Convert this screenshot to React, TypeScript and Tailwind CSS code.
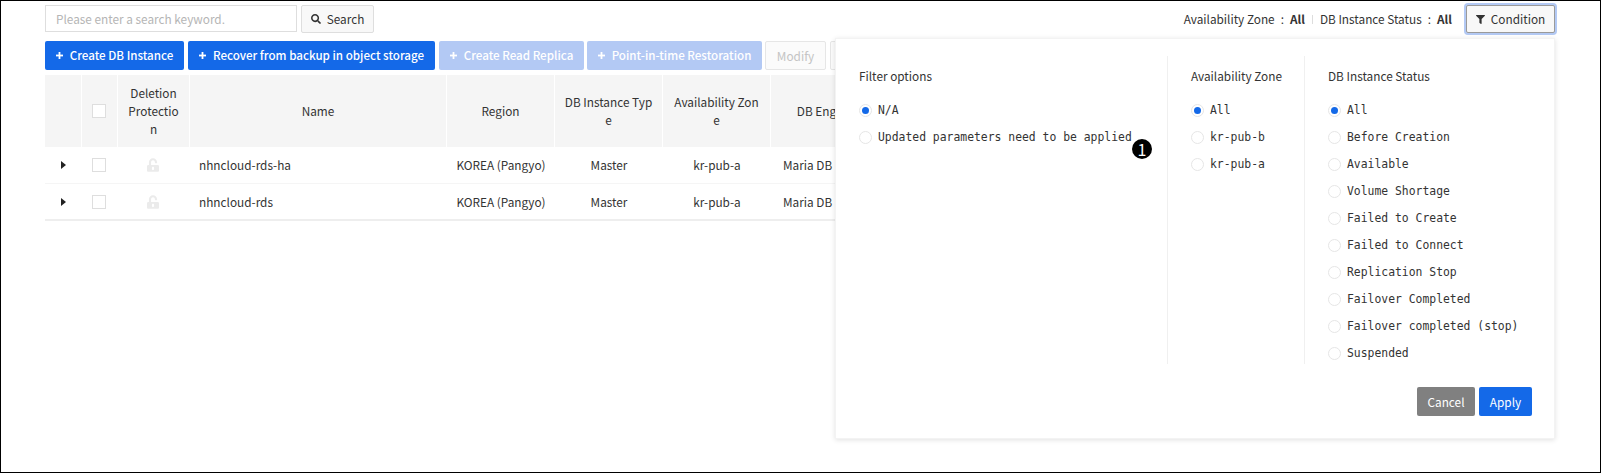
import { FaFilter, FaSearch, FaUnlockAlt } from 'react-icons/fa';

const sans = "font-['Noto_Sans_CJK_KR','Noto_Sans',sans-serif]";

const zones = ['All', 'kr-pub-b', 'kr-pub-a'];
const statuses = [
    'All',
    'Before Creation',
    'Available',
    'Volume Shortage',
    'Failed to Create',
    'Failed to Connect',
    'Replication Stop',
    'Failover Completed',
    'Failover completed (stop)',
    'Suspended',
];
const rows = ['nhncloud-rds-ha', 'nhncloud-rds'];

function Plus() {
    return (
        <svg width="7" height="7" viewBox="0 0 7 7" className="shrink-0" fill="currentColor">
            <rect x="2.6" y="0" width="1.8" height="7" />
            <rect x="0" y="2.6" width="7" height="1.8" />
        </svg>
    );
}

function ActionButton({ label, width, disabled }: { label: string; width: string; disabled?: boolean }) {
    return (
        <button
            className={`${width} h-[29px] flex items-center justify-center gap-[7px] rounded-[2px] text-white text-[11.6px] font-medium ${
                disabled ? 'bg-[#b3c9f4]' : 'bg-[#1469e8]'
            }`}
        >
            <Plus />
            {label}
        </button>
    );
}

function Radio({ label, checked }: { label: string; checked?: boolean }) {
    return (
        <label className="flex items-center h-[27px] gap-[6px]">
            <span className="w-[13px] h-[13px] rounded-full border border-[#e6e6e6] bg-white flex items-center justify-center shrink-0">
                {checked && <span className="w-[7px] h-[7px] rounded-full bg-[#1469e8]" />}
            </span>
            <span className="font-['DejaVu_Sans_Mono',monospace] text-[11.4px] text-[#333] whitespace-nowrap">{label}</span>
        </label>
    );
}

function Checkbox() {
    return <span className="block mx-auto w-[14px] h-[14px] border border-[#dedede] bg-white" />;
}

function Heading({ children }: { children: string }) {
    return <div className="h-[19px] flex items-center leading-none mt-[10px] mb-[12px]">{children}</div>;
}

export default function App() {
    return (
        <div className={`${sans} relative w-[1601px] h-[473px] border border-black bg-white text-[#333] text-[11.8px] overflow-hidden`}>
            <div className="w-[1510px] ml-[44px] pt-[4px]">
                {/* search bar */}
                <div className="flex items-start justify-between h-[28px]">
                    <div className="flex items-start gap-[4px]">
                        <input
                            placeholder="Please enter a search keyword."
                            className="w-[252px] h-[27px] border border-[#dedede] px-[10px] text-[11.8px] placeholder:text-[#b5b5b5] outline-none"
                        />
                        <button className="w-[73px] h-[28px] flex items-center justify-center gap-[6px] border border-[#dedede] bg-[#f8f8f8] rounded-[2px]">
                            <FaSearch className="w-[10px] h-[10px] text-[#333]" />
                            Search
                        </button>
                    </div>
                    <div className="flex items-center h-[28px]">
                        <span>Availability Zone</span>
                        <span className="mx-[6px]">:</span>
                        <b className="font-bold">All</b>
                        <span className="w-px h-[9px] bg-[#ddd] mx-[7px]" />
                        <span>DB Instance Status</span>
                        <span className="mx-[6px]">:</span>
                        <b className="font-bold">All</b>
                        <button className="ml-[14px] w-[89px] h-[28px] flex items-center justify-center gap-[6px] border border-[#9a9a9a] bg-[#f8f8f8] rounded-[2px] ring-2 ring-[#b3c9f4]">
                            <FaFilter className="w-[9px] h-[9px] text-[#333]" />
                            Condition
                        </button>
                    </div>
                </div>

                {/* actions */}
                <div className="flex gap-[4px] mt-[8px] h-[29px]">
                    <ActionButton label="Create DB Instance" width="w-[139px]" />
                    <ActionButton label="Recover from backup in object storage" width="w-[247px]" />
                    <ActionButton label="Create Read Replica" width="w-[145px]" disabled />
                    <ActionButton label="Point-in-time Restoration" width="w-[175px] -ml-px" disabled />
                    <button className="w-[61px] -ml-px border border-[#e6e6e6] bg-[#fbfbfb] rounded-[2px] text-[#c4c4c4]">Modify</button>
                    <button className="w-[61px] border border-[#e6e6e6] bg-[#fbfbfb] rounded-[2px]" />
                </div>

                {/* instances */}
                <table className="mt-[5px] table-fixed border-separate border-spacing-0 w-[834px] text-center">
                    <colgroup>
                        <col className="w-[37px]" />
                        <col className="w-[36px]" />
                        <col className="w-[72px]" />
                        <col className="w-[257px]" />
                        <col className="w-[108px]" />
                        <col className="w-[108px]" />
                        <col className="w-[108px]" />
                        <col className="w-[108px]" />
                    </colgroup>
                    <thead>
                        <tr className="h-[72px] bg-[#f5f5f5] leading-[18px]">
                            <th className="font-normal border-r border-white" />
                            <th className="font-normal border-r border-white pr-[2px]">
                                <Checkbox />
                            </th>
                            <th className="font-normal border-r border-white break-words px-[9px]">Deletion Protection</th>
                            <th className="font-normal border-r border-white">Name</th>
                            <th className="font-normal border-r border-white">Region</th>
                            <th className="font-normal border-r border-white break-all px-[8px]">DB Instance Type</th>
                            <th className="font-normal border-r border-white break-all px-[10px]">Availability Zone</th>
                            <th className="font-normal whitespace-nowrap">DB Engine</th>
                        </tr>
                    </thead>
                    <tbody>
                        {rows.map((name, i) => {
                            const cell = `h-[37px] ${i === rows.length - 1 ? 'border-b-2 border-[#eee]' : 'border-b border-[#f5f5f5]'}`;
                            return (
                                <tr key={name}>
                                    <td className={cell}>
                                        <span className="block mx-auto w-0 border-y-[4px] border-l-[5px] border-y-transparent border-l-[#222]" />
                                    </td>
                                    <td className={`${cell} pr-[2px]`}>
                                        <Checkbox />
                                    </td>
                                    <td className={`${cell} pr-[2px]`}>
                                        <FaUnlockAlt className="mx-auto w-[12px] h-[14px] text-[#ebebeb]" />
                                    </td>
                                    <td className={`${cell} text-left pl-[9px]`}>{name}</td>
                                    <td className={cell}>KOREA (Pangyo)</td>
                                    <td className={cell}>Master</td>
                                    <td className={cell}>kr-pub-a</td>
                                    <td className={`${cell} text-left pl-[12px] whitespace-nowrap`}>Maria DB</td>
                                </tr>
                            );
                        })}
                    </tbody>
                </table>
            </div>

            {/* filter dropdown */}
            <div className="absolute left-[834px] top-[37px] w-[720px] h-[401px] bg-white border border-[#f3f3f3] shadow-[0_1px_5px_rgba(0,0,0,0.12)] pt-[17px]">
                <div className="flex h-[308px]">
                    <div className="w-[332px] pl-[23px] border-r border-[#f0f0f0]">
                        <Heading>Filter options</Heading>
                        <Radio label="N/A" checked />
                        <Radio label="Updated parameters need to be applied" />
                    </div>
                    <div className="w-[137px] pl-[23px] border-r border-[#f0f0f0]">
                        <Heading>Availability Zone</Heading>
                        {zones.map((z, i) => (
                            <Radio key={z} label={z} checked={i === 0} />
                        ))}
                    </div>
                    <div className="pl-[23px]">
                        <Heading>DB Instance Status</Heading>
                        {statuses.map((s, i) => (
                            <Radio key={s} label={s} checked={i === 0} />
                        ))}
                    </div>
                </div>
                <div className="flex justify-end gap-[4px] mt-[23px] pr-[22px]">
                    <button className="w-[58px] h-[29px] bg-[#808080] text-white rounded-[2px]">Cancel</button>
                    <button className="w-[53px] h-[29px] bg-[#1469e8] text-white rounded-[2px]">Apply</button>
                </div>
                <span className="absolute left-[296px] top-[100px] w-[20px] h-[20px] rounded-full bg-black text-white text-[16px] leading-[20px] text-center">1</span>
            </div>
        </div>
    );
}
